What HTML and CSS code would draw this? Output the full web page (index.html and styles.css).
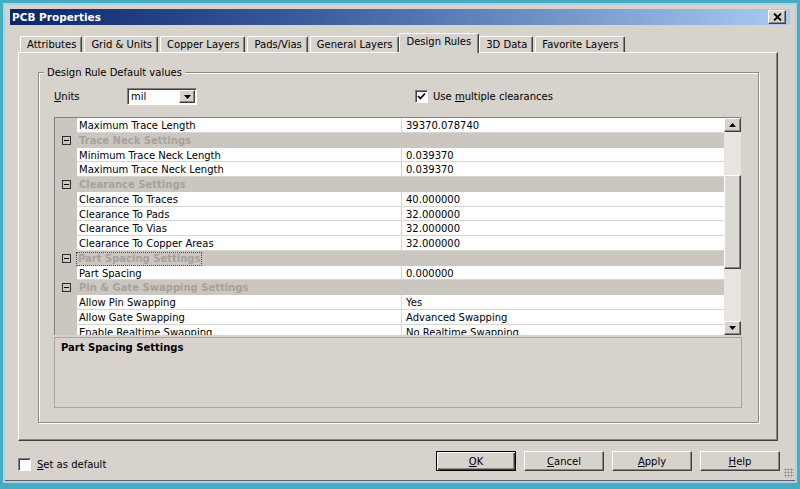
FILE: index.html
```html
<!DOCTYPE html>
<html>
<head>
<meta charset="utf-8">
<title>PCB Properties</title>
<link rel="stylesheet" href="styles.css">
</head>
<body>
<div class="window">
  <div class="titlebar">
    <span class="title">PCB Properties</span>
    <span class="close">
      <svg width="9" height="8" viewBox="0 0 9 8"><path d="M1 0.5 L8 7.5 M8 0.5 L1 7.5" stroke="#000" stroke-width="1.8" fill="none"/></svg>
    </span>
  </div>

  <div class="tabview">
    <div class="tabs">
      <div class="tab">Attributes</div>
      <div class="tab">Grid &amp; Units</div>
      <div class="tab">Copper Layers</div>
      <div class="tab">Pads/Vias</div>
      <div class="tab">General Layers</div>
      <div class="tab active">Design Rules</div>
      <div class="tab">3D Data</div>
      <div class="tab">Favorite Layers</div>
    </div>
    <div class="panel">
      <div class="group">
        <div class="legend">Design Rule Default values</div>
        <div class="units-row">
          <span class="units-label"><u>U</u>nits</span>
          <div class="select">
            <span class="select-text">mil</span>
            <span class="drop-btn">
              <svg width="7" height="4" viewBox="0 0 7 4"><path d="M0 0 H7 L3.5 4 Z" fill="#000"/></svg>
            </span>
          </div>
          <label class="opt-check">
            <span class="checkbox">
              <svg width="9" height="9" viewBox="0 0 9 9"><path d="M1 4 L3.3 6.5 L8 1.5" stroke="#000" stroke-width="1.7" fill="none"/></svg>
            </span>
            <span>Use <u>m</u>ultiple clearances</span>
          </label>
        </div>

        <div class="grid">
          <div class="grid-body">
            <div class="rows">
              <div class="row"><span class="gutter"></span><span class="cell name">Maximum Trace Length</span><span class="cell value">39370.078740</span></div>
              <div class="row cat-row"><span class="gutter"><span class="expander"><span class="minus"></span></span></span><span class="cat">Trace Neck Settings</span></div>
              <div class="row"><span class="gutter"></span><span class="cell name">Minimum Trace Neck Length</span><span class="cell value">0.039370</span></div>
              <div class="row"><span class="gutter"></span><span class="cell name">Maximum Trace Neck Length</span><span class="cell value">0.039370</span></div>
              <div class="row cat-row"><span class="gutter"><span class="expander"><span class="minus"></span></span></span><span class="cat">Clearance Settings</span></div>
              <div class="row"><span class="gutter"></span><span class="cell name">Clearance To Traces</span><span class="cell value">40.000000</span></div>
              <div class="row"><span class="gutter"></span><span class="cell name">Clearance To Pads</span><span class="cell value">32.000000</span></div>
              <div class="row"><span class="gutter"></span><span class="cell name">Clearance To Vias</span><span class="cell value">32.000000</span></div>
              <div class="row"><span class="gutter"></span><span class="cell name">Clearance To Copper Areas</span><span class="cell value">32.000000</span></div>
              <div class="row cat-row"><span class="gutter"><span class="expander"><span class="minus"></span></span></span><span class="cat"><span class="focus">Part Spacing Settings</span></span></div>
              <div class="row"><span class="gutter"></span><span class="cell name">Part Spacing</span><span class="cell value">0.000000</span></div>
              <div class="row cat-row"><span class="gutter"><span class="expander"><span class="minus"></span></span></span><span class="cat">Pin &amp; Gate Swapping Settings</span></div>
              <div class="row"><span class="gutter"></span><span class="cell name">Allow Pin Swapping</span><span class="cell value">Yes</span></div>
              <div class="row"><span class="gutter"></span><span class="cell name">Allow Gate Swapping</span><span class="cell value">Advanced Swapping</span></div>
              <div class="row"><span class="gutter"></span><span class="cell name">Enable Realtime Swapping</span><span class="cell value">No Realtime Swapping</span></div>
            </div>
            <div class="scrollbar">
              <span class="sb-btn">
                <svg width="7" height="4" viewBox="0 0 7 4"><path d="M3.5 0 L7 4 H0 Z" fill="#000"/></svg>
              </span>
              <span class="sb-track sb-track-top"></span>
              <span class="sb-thumb"></span>
              <span class="sb-track sb-track-bottom"></span>
              <span class="sb-btn">
                <svg width="7" height="4" viewBox="0 0 7 4"><path d="M0 0 H7 L3.5 4 Z" fill="#000"/></svg>
              </span>
            </div>
          </div>
          <div class="desc">Part Spacing Settings</div>
        </div>
      </div>
    </div>
  </div>

  <div class="footer">
    <label class="default-check">
      <span class="checkbox"></span>
      <span><u>S</u>et as default</span>
    </label>
    <div class="buttons">
      <span class="btn btn-default"><span><u>O</u>K</span></span>
      <span class="btn"><span><u>C</u>ancel</span></span>
      <span class="btn"><span><u>A</u>pply</span></span>
      <span class="btn"><span><u>H</u>elp</span></span>
    </div>
  </div>
  <span class="grip"></span>
</div>
</body>
</html>
```

FILE: styles.css
```css
* {
  box-sizing: border-box;
}

html, body {
  margin: 0;
}

body {
  width: 800px;
  height: 489px;
  overflow: hidden;
  padding: 3px;
  background: #47abc2;
  font-family: "DejaVu Sans", "Liberation Sans", sans-serif;
  font-size: 10px;
  color: #000;
}

u {
  text-decoration: underline;
  text-underline-offset: 1px;
}

.window {
  position: relative;
  height: 480px;
  border: 2px solid #a3d8e3;
  background: #d7d2cc;
  padding: 4px 5px 0 5px;
  display: flex;
  flex-direction: column;
  box-shadow: inset 0 -1px 0 #5b6266;
}

/* Title bar */
.titlebar {
  height: 16px;
  flex: none;
  display: flex;
  align-items: center;
  justify-content: space-between;
  padding: 0 4px 0 2px;
  background: linear-gradient(to right, #0b266a 0%, #3d5f9e 40%, #a8ccf0 100%);
  color: #fff;
  font-weight: bold;
  font-size: 10.5px;
}

.close {
  width: 18px;
  height: 14px;
  display: flex;
  align-items: center;
  justify-content: center;
  background: #d7d2cc;
  border: 1px solid;
  border-color: #fff #404040 #404040 #fff;
  box-shadow: inset -1px -1px 0 #8a8680;
}

/* Tabs */
.tabview {
  margin: 8px 12px 0 8px;
}

.tabs {
  display: flex;
  align-items: flex-end;
  gap: 2px;
  height: 19px;
  padding-left: 2px;
}

.tab {
  height: 16px;
  line-height: 15px;
  padding: 0 5px 0 6px;
  border: 1px solid;
  border-bottom: none;
  border-color: #fff #404040 #fff #fff;
  border-radius: 2px 2px 0 0;
  box-shadow: inset -1px 0 0 #8a8680;
  white-space: nowrap;
}

.tab.active {
  position: relative;
  height: 20px;
  line-height: 16px;
  margin: 0 -2px -1px;
  padding: 0 7px;
  background: #d7d2cc;
}

.panel {
  height: 389px;
  border: 1px solid;
  border-color: #fff #404040 #404040 #fff;
  box-shadow: inset -1px -1px 0 #8a8680;
  padding: 19px 0 0 19px;
}

/* Group box */
.group {
  width: 721px;
  height: 351px;
  border: 1px solid #8f8a84;
  box-shadow: 1px 1px 0 #fff, inset 1px 1px 0 #fff;
}

.legend {
  width: max-content;
  margin: -7px 0 0 5px;
  padding: 0 3px;
  line-height: 13px;
  background: #d7d2cc;
}

.units-row {
  display: flex;
  align-items: center;
  height: 17px;
  margin: 9px 0 0 15px;
}

.units-label {
  width: 73px;
}

.select {
  width: 70px;
  height: 17px;
  display: flex;
  align-items: center;
  padding: 0 1px 0 3px;
  background: #fff;
  border: 1px solid;
  border-color: #808080 #fff #fff #808080;
  box-shadow: inset 1px 1px 0 #404040;
}

.select-text {
  flex: 1;
}

.drop-btn {
  width: 16px;
  height: 13px;
  display: flex;
  align-items: center;
  justify-content: center;
  background: #d7d2cc;
  border: 1px solid;
  border-color: #fff #404040 #404040 #fff;
  box-shadow: inset -1px -1px 0 #8a8680;
}

.opt-check {
  display: flex;
  align-items: center;
  gap: 5px;
  margin-left: 218px;
}

.checkbox {
  width: 13px;
  height: 13px;
  display: flex;
  align-items: center;
  justify-content: center;
  background: #fff;
  border: 1px solid;
  border-color: #808080 #fff #fff #808080;
  box-shadow: inset 1px 1px 0 #404040;
}

/* Property grid */
.grid {
  width: 688px;
  margin: 12px 0 0 15px;
}

.grid-body {
  height: 218px;
  display: flex;
  border-top: 1px solid #808080;
  border-left: 1px solid #808080;
  overflow: hidden;
}

.rows {
  width: 669px;
  flex: none;
  overflow: hidden;
}

.row {
  display: grid;
  grid-template-columns: 22px 325px 322px;
  height: 14.75px;
  line-height: 15px;
}

.gutter {
  background: #cbc6c0;
  display: flex;
  align-items: center;
  justify-content: center;
}

.cell {
  background: #fff;
  border-bottom: 1px solid #d9d5d0;
  white-space: nowrap;
  overflow: hidden;
}

.name {
  padding-left: 2px;
  border-right: 1px solid #d9d5d0;
}

.value {
  padding-left: 4px;
}

.cat {
  grid-column: 2 / 4;
  background: #cbc6c0;
  color: #a7a29d;
  font-weight: bold;
  padding-left: 2px;
  white-space: nowrap;
}

.focus {
  display: inline-block;
  line-height: 12px;
  padding: 0 1px;
  margin-left: -2px;
  vertical-align: middle;
  outline: 1px dotted #4a4a4a;
}

.expander {
  width: 9px;
  height: 9px;
  display: flex;
  align-items: center;
  justify-content: center;
  border: 1px solid #2e2e2e;
}

.minus {
  width: 5px;
  height: 1px;
  background: #000;
}

/* Scrollbar */
.scrollbar {
  width: 17px;
  flex: none;
  display: flex;
  flex-direction: column;
  background: #e8e5e1;
}

.sb-btn {
  height: 14px;
  flex: none;
  display: flex;
  align-items: center;
  justify-content: center;
  background: #d7d2cc;
  border: 1px solid;
  border-color: #fff #404040 #404040 #fff;
  box-shadow: inset -1px -1px 0 #8a8680;
}

.sb-track-top {
  height: 43px;
}

.sb-thumb {
  height: 94px;
  flex: none;
  background: #dcd8d3;
  border: 1px solid;
  border-color: #fff #404040 #404040 #fff;
  box-shadow: inset -1px -1px 0 #8a8680;
}

.sb-track-bottom {
  flex: 1;
}

.desc {
  height: 71px;
  margin-top: 2px;
  padding: 3px 6px;
  border: 1px solid #aaa59f;
  font-weight: bold;
  line-height: 14px;
}

/* Footer */
.footer {
  display: flex;
  align-items: flex-end;
  height: 20px;
  margin: 10px 10px 0 8px;
}

.default-check {
  display: flex;
  align-items: center;
  gap: 6px;
}

.buttons {
  margin-left: auto;
  display: flex;
  gap: 8px;
}

.btn {
  width: 80px;
  height: 20px;
  display: flex;
  align-items: center;
  justify-content: center;
  background: #d7d2cc;
  border: 1px solid;
  border-color: #fff #404040 #404040 #fff;
  box-shadow: inset -1px -1px 0 #8a8680;
}

.btn-default {
  border-color: #000;
  box-shadow: inset 1px 1px 0 #fff, inset -1px -1px 0 #404040, inset -2px -2px 0 #8a8680;
}

.grip {
  position: absolute;
  right: 1px;
  bottom: 3px;
  width: 10px;
  height: 10px;
  background-image: radial-gradient(circle, #8a8680 0.9px, transparent 1.1px);
  background-size: 3px 3px;
}
```
